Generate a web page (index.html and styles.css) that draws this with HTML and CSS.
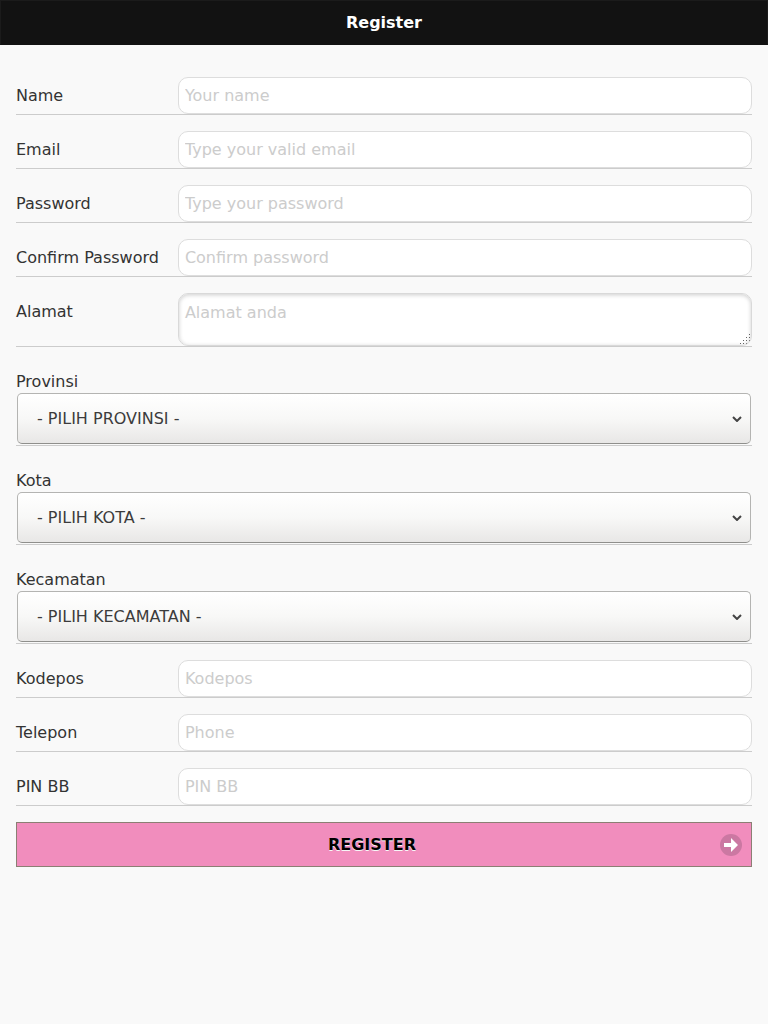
FILE: index.html
```
<!DOCTYPE html>
<html lang="id">
<head>
<meta charset="utf-8">
<meta name="viewport" content="width=device-width, initial-scale=1">
<title>Register</title>
<link rel="stylesheet" href="styles.css">
</head>
<body>
<header class="header"><h1 class="title">Register</h1></header>
<main class="content">
<form class="form">
<div class="row"><label class="label" for="name">Name</label><input class="field" id="name" type="text" placeholder="Your name"></div>
<div class="row"><label class="label" for="email">Email</label><input class="field" id="email" type="email" placeholder="Type your valid email"></div>
<div class="row"><label class="label" for="password">Password</label><input class="field" id="password" type="password" placeholder="Type your password"></div>
<div class="row"><label class="label" for="confirm">Confirm Password</label><input class="field" id="confirm" type="password" placeholder="Confirm password"></div>
<div class="row"><label class="label" for="alamat">Alamat</label><textarea class="field area" id="alamat" placeholder="Alamat anda"></textarea></div>
<div class="row stacked"><label class="stacked-label" for="provinsi">Provinsi</label><div class="picker"><select class="select" id="provinsi"><option>- PILIH PROVINSI -</option></select><svg class="chevron" viewBox="0 0 10 6" aria-hidden="true"><path d="M1 1l4 4 4-4"/></svg></div></div>
<div class="row stacked"><label class="stacked-label" for="kota">Kota</label><div class="picker"><select class="select" id="kota"><option>- PILIH KOTA -</option></select><svg class="chevron" viewBox="0 0 10 6" aria-hidden="true"><path d="M1 1l4 4 4-4"/></svg></div></div>
<div class="row stacked"><label class="stacked-label" for="kecamatan">Kecamatan</label><div class="picker"><select class="select" id="kecamatan"><option>- PILIH KECAMATAN -</option></select><svg class="chevron" viewBox="0 0 10 6" aria-hidden="true"><path d="M1 1l4 4 4-4"/></svg></div></div>
<div class="row"><label class="label" for="kodepos">Kodepos</label><input class="field" id="kodepos" type="text" placeholder="Kodepos"></div>
<div class="row"><label class="label" for="telepon">Telepon</label><input class="field" id="telepon" type="tel" placeholder="Phone"></div>
<div class="row"><label class="label" for="pin">PIN BB</label><input class="field" id="pin" type="text" placeholder="PIN BB"></div>
<button class="submit" type="submit"><span class="submit-text">REGISTER</span><svg class="arrow" viewBox="0 0 22 22" aria-hidden="true"><circle cx="11" cy="11" r="11" fill="#cb78a2"/><path d="M4 9h7V4l7 7-7 7v-5H4z" fill="#fff"/></svg></button>
</form>
</main>
</body>
</html>
```
FILE: styles.css
```
* { box-sizing: border-box; }
body {
  margin: 0;
  background: #f9f9f9;
  color: #333;
  font: 16px/20px "DejaVu Sans", sans-serif;
}
.header {
  padding: 12px 16px;
  background: #121212;
  border: 1px solid #1b1b1b;
  border-bottom-color: #121212;
}
.title {
  margin: 0;
  color: #fff;
  font-size: 16px;
  line-height: 19px;
  text-align: center;
}
.content { padding: 32px 16px; }
.form {
  display: flex;
  flex-direction: column;
  gap: 16px;
}
.row {
  display: flex;
  align-items: flex-start;
  border-bottom: 1px solid #ccc;
}
.label {
  flex: 0 0 22%;
  padding-top: 9px;
  white-space: nowrap;
}
.field {
  flex: 1;
  min-width: 0;
  height: 37px;
  margin: 0;
  padding: 6px;
  background: #fff;
  border: 1px solid #ddd;
  border-radius: 10px;
  color: #333;
  font: inherit;
}
.field::placeholder { color: #ccc; }
.area {
  height: 53px;
  padding-top: 9px;
  resize: none;
  border-color: #d9d9d9;
  box-shadow: inset 0 1px 4px rgba(0, 0, 0, .2);
  background: #fff url("data:image/svg+xml,%3Csvg xmlns='http://www.w3.org/2000/svg' width='12' height='12' fill='%23666'%3E%3Cpath d='M10 1h1v1h-1zM10 4h1v1h-1zM7 4h1v1H7zM10 7h1v1h-1zM7 7h1v1H7zM4 7h1v1H4zM10 10h1v1h-1zM7 10h1v1H7zM4 10h1v1H4zM1 10h1v1H1z'/%3E%3C/svg%3E") no-repeat right bottom;
}
.stacked {
  flex-direction: column;
  align-items: stretch;
  padding: 8px 0 1px;
}
.stacked-label { line-height: 22px; }
.picker {
  position: relative;
  margin: 0 1px;
}
.select {
  display: block;
  width: 100%;
  height: 51px;
  padding: 0 32px 0 19px;
  appearance: none;
  background: linear-gradient(#fff, #f8f8f7 50%, #e8e7e6);
  border: 1px solid #b4b4b2;
  border-bottom-color: #8f8f8c;
  border-radius: 5px;
  color: #3c3c3c;
  font: 16px/20px "DejaVu Sans", sans-serif;
}
.chevron {
  position: absolute;
  right: 9px;
  top: 23px;
  width: 10px;
  height: 6px;
  fill: none;
  stroke: #444;
  stroke-width: 2;
  pointer-events: none;
}
.submit {
  display: flex;
  align-items: center;
  padding: 10px 9px 10px 7px;
  background: #f18dbd;
  border: 1px solid #8b7f74;
  color: #000;
  font: bold 16px/23px "DejaVu Sans", sans-serif;
  text-shadow: 0 1px 0 #f6f6f6;
}
.submit-text { flex: 1; }
.arrow {
  width: 22px;
  height: 22px;
}
```
